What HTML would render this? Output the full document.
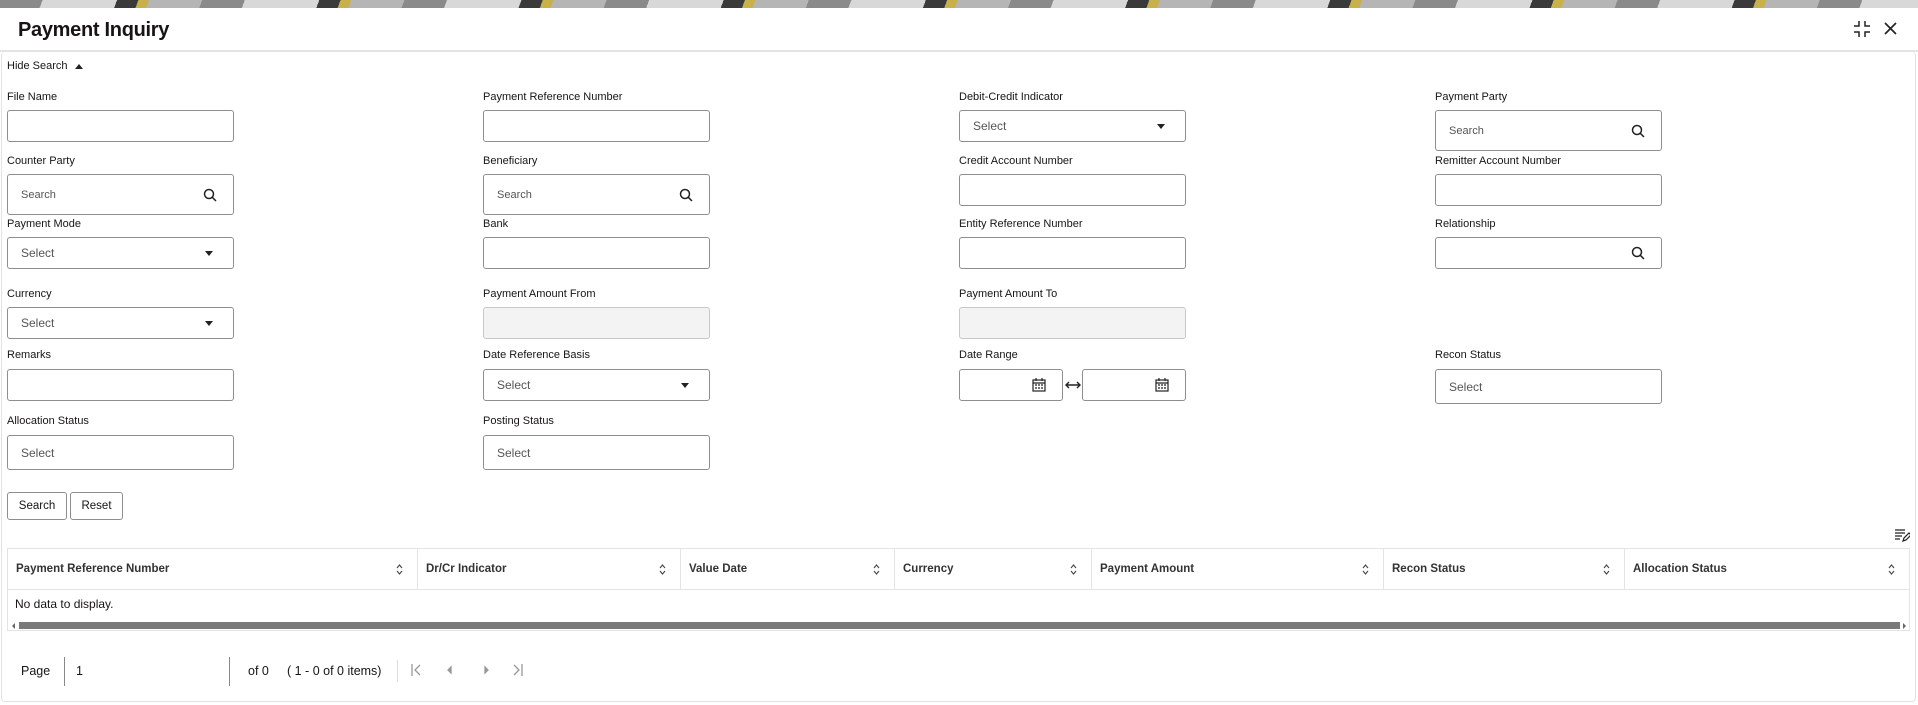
<!DOCTYPE html>
<html><head><meta charset="utf-8"><style>
*{box-sizing:border-box;margin:0;padding:0}
body{width:1918px;height:705px;position:relative;background:#fff;font-family:"Liberation Sans",sans-serif;color:#161513;overflow:hidden}
.ban{position:absolute;left:0;top:0;width:1918px;height:8px;background:repeating-linear-gradient(110deg,#8a8a8a 0 40px,#d8d8d8 40px 110px,#3a3a3a 110px 130px,#c8b04a 130px 140px,#b5b5b5 140px 190px)}
.ttl{position:absolute;left:0;top:8px;width:1918px;height:44px;background:#fff;border-bottom:2px solid #e4e4e4}
.ttl h1{position:absolute;left:18px;top:11px;font-size:20px;font-weight:bold;letter-spacing:-.3px}
.card{position:absolute;left:1px;top:52px;width:1915px;height:650px;border:1px solid #e2e2e2;border-top:none;border-radius:4px}
.a{position:absolute;font-size:11.5px}
.l{position:absolute;font-size:11px;color:#161513}
.in{position:absolute;width:227px;height:32px;border:1px solid #8e8e8e;border-radius:3px;background:#fff;font-size:12px;color:#555}
.in span{position:absolute;left:13px;top:50%;transform:translateY(-50%)}
.s{height:41px}
.dis{background:#f3f3f3;border-color:#c8c8c8}
.car{position:absolute;right:20px;top:50%;margin-top:-2px;border-left:4px solid transparent;border-right:4px solid transparent;border-top:5px solid #222}
.mag{position:absolute;right:16px;top:50%;transform:translateY(-50%)}
.btn{position:absolute;top:492px;height:28px;border:1px solid #8e8e8e;border-radius:3px;font-size:11.5px;line-height:26px;text-align:center;background:#fff}
.th{position:absolute;top:548px;height:42px;border-top:1px solid #e4e4e4;border-bottom:1px solid #e4e4e4;font-size:11.5px;font-weight:bold;color:#333}
.col{position:absolute;top:0;height:41px;border-right:1px solid #e4e4e4;line-height:41px;padding-left:8px}
.sort{position:absolute;right:14px;top:15px}
</style></head><body>
<div class="ban"></div>
<div class="ttl"><h1>Payment Inquiry</h1>
<svg style="position:absolute;left:1853px;top:12px" width="18" height="18" viewBox="0 0 18 18" fill="none" stroke="#222" stroke-width="1.5"><path d="M6 1v5H1M12 1v5h5M6 17v-5H1M12 17v-5h5"/></svg>
<svg style="position:absolute;left:1884px;top:14px" width="13" height="13" viewBox="0 0 13 13" stroke="#222" stroke-width="1.7"><path d="M1 1l11 11M12 1L1 12"/></svg>
</div>
<div class="card"></div>
<div class="a" style="left:7px;top:60px;font-size:11px">Hide Search <span style="display:inline-block;margin-left:4px;border-left:4px solid transparent;border-right:4px solid transparent;border-bottom:5px solid #222"></span></div>

<div class="l" style="left:7px;top:91px">File Name</div><div class="in" style="left:7px;top:110px"></div>
<div class="l" style="left:483px;top:91px">Payment Reference Number</div><div class="in" style="left:483px;top:110px"></div>
<div class="l" style="left:959px;top:91px">Debit-Credit Indicator</div><div class="in" style="left:959px;top:110px"><span>Select</span><i class="car"></i></div>
<div class="l" style="left:1435px;top:91px">Payment Party</div><div class="in s" style="left:1435px;top:110px"><span style="font-size:11px">Search</span><svg class="mag" width="14" height="14" viewBox="0 0 14 14" fill="none" stroke="#222" stroke-width="1.5"><circle cx="6" cy="6" r="4.5"/><path d="M9.3 9.3L13 13"/></svg></div>

<div class="l" style="left:7px;top:155px">Counter Party</div><div class="in s" style="left:7px;top:174px"><span style="font-size:11px">Search</span><svg class="mag" width="14" height="14" viewBox="0 0 14 14" fill="none" stroke="#222" stroke-width="1.5"><circle cx="6" cy="6" r="4.5"/><path d="M9.3 9.3L13 13"/></svg></div>
<div class="l" style="left:483px;top:155px">Beneficiary</div><div class="in s" style="left:483px;top:174px"><span style="font-size:11px">Search</span><svg class="mag" width="14" height="14" viewBox="0 0 14 14" fill="none" stroke="#222" stroke-width="1.5"><circle cx="6" cy="6" r="4.5"/><path d="M9.3 9.3L13 13"/></svg></div>
<div class="l" style="left:959px;top:155px">Credit Account Number</div><div class="in" style="left:959px;top:174px"></div>
<div class="l" style="left:1435px;top:155px">Remitter Account Number</div><div class="in" style="left:1435px;top:174px"></div>

<div class="l" style="left:7px;top:218px">Payment Mode</div><div class="in" style="left:7px;top:237px"><span>Select</span><i class="car"></i></div>
<div class="l" style="left:483px;top:218px">Bank</div><div class="in" style="left:483px;top:237px"></div>
<div class="l" style="left:959px;top:218px">Entity Reference Number</div><div class="in" style="left:959px;top:237px"></div>
<div class="l" style="left:1435px;top:218px">Relationship</div><div class="in" style="left:1435px;top:237px"><svg class="mag" width="14" height="14" viewBox="0 0 14 14" fill="none" stroke="#222" stroke-width="1.5"><circle cx="6" cy="6" r="4.5"/><path d="M9.3 9.3L13 13"/></svg></div>

<div class="l" style="left:7px;top:288px">Currency</div><div class="in" style="left:7px;top:307px"><span>Select</span><i class="car"></i></div>
<div class="l" style="left:483px;top:288px">Payment Amount From</div><div class="in dis" style="left:483px;top:307px"></div>
<div class="l" style="left:959px;top:288px">Payment Amount To</div><div class="in dis" style="left:959px;top:307px"></div>

<div class="l" style="left:7px;top:349px">Remarks</div><div class="in" style="left:7px;top:369px"></div>
<div class="l" style="left:483px;top:349px">Date Reference Basis</div><div class="in" style="left:483px;top:369px"><span>Select</span><i class="car"></i></div>
<div class="l" style="left:959px;top:349px">Date Range</div>
<div class="in" style="left:959px;top:369px;width:104px"><svg class="mag" width="14" height="14" viewBox="0 0 14 14" fill="none" stroke="#222" stroke-width="1.2"><rect x="1" y="2" width="12" height="11"/><path d="M1 5h12M4 0v3M10 0v3M3 7h2M6 7h2M9 7h2M3 10h2M6 10h2M9 10h2"/></svg></div>
<svg style="position:absolute;left:1065px;top:380px" width="16" height="10" viewBox="0 0 16 10" fill="none" stroke="#222" stroke-width="1.4"><path d="M1 5h14M4 2L1 5l3 3M12 2l3 3-3 3"/></svg>
<div class="in" style="left:1082px;top:369px;width:104px"><svg class="mag" width="14" height="14" viewBox="0 0 14 14" fill="none" stroke="#222" stroke-width="1.2"><rect x="1" y="2" width="12" height="11"/><path d="M1 5h12M4 0v3M10 0v3M3 7h2M6 7h2M9 7h2M3 10h2M6 10h2M9 10h2"/></svg></div>
<div class="l" style="left:1435px;top:349px">Recon Status</div><div class="in" style="left:1435px;top:369px;height:35px"><span>Select</span></div>

<div class="l" style="left:7px;top:415px">Allocation Status</div><div class="in" style="left:7px;top:435px;height:35px"><span>Select</span></div>
<div class="l" style="left:483px;top:415px">Posting Status</div><div class="in" style="left:483px;top:435px;height:35px"><span>Select</span></div>

<div class="btn" style="left:7px;width:60px">Search</div>
<div class="btn" style="left:70px;width:53px">Reset</div>

<svg style="position:absolute;left:1894px;top:528px" width="16" height="15" viewBox="0 0 16 15" fill="none" stroke="#222" stroke-width="1.2"><path d="M1 2h10M1 5h10M1 8h7M1 11h5M9 13l1-3 5-5 2 2-5 5z"/></svg>

<div class="th" style="left:7px;width:1903px;border-left:1px solid #e4e4e4;border-right:1px solid #e4e4e4">
<div class="col" style="left:0;width:410px">Payment Reference Number<svg class="sort" width="7" height="11" viewBox="0 0 7 11" fill="none" stroke="#444" stroke-width="1.1"><path d="M1 4l2.5-3 2.5 3M1 7l2.5 3 2.5-3"/></svg></div>
<div class="col" style="left:410px;width:263px">Dr/Cr Indicator<svg class="sort" width="7" height="11" viewBox="0 0 7 11" fill="none" stroke="#444" stroke-width="1.1"><path d="M1 4l2.5-3 2.5 3M1 7l2.5 3 2.5-3"/></svg></div>
<div class="col" style="left:673px;width:214px">Value Date<svg class="sort" width="7" height="11" viewBox="0 0 7 11" fill="none" stroke="#444" stroke-width="1.1"><path d="M1 4l2.5-3 2.5 3M1 7l2.5 3 2.5-3"/></svg></div>
<div class="col" style="left:887px;width:197px">Currency<svg class="sort" width="7" height="11" viewBox="0 0 7 11" fill="none" stroke="#444" stroke-width="1.1"><path d="M1 4l2.5-3 2.5 3M1 7l2.5 3 2.5-3"/></svg></div>
<div class="col" style="left:1084px;width:292px">Payment Amount<svg class="sort" width="7" height="11" viewBox="0 0 7 11" fill="none" stroke="#444" stroke-width="1.1"><path d="M1 4l2.5-3 2.5 3M1 7l2.5 3 2.5-3"/></svg></div>
<div class="col" style="left:1376px;width:241px">Recon Status<svg class="sort" width="7" height="11" viewBox="0 0 7 11" fill="none" stroke="#444" stroke-width="1.1"><path d="M1 4l2.5-3 2.5 3M1 7l2.5 3 2.5-3"/></svg></div>
<div class="col" style="left:1617px;width:284px;border-right:none">Allocation Status<svg class="sort" width="7" height="11" viewBox="0 0 7 11" fill="none" stroke="#444" stroke-width="1.1"><path d="M1 4l2.5-3 2.5 3M1 7l2.5 3 2.5-3"/></svg></div>
</div>
<div style="position:absolute;left:7px;top:590px;width:1903px;height:41px;border:1px solid #e4e4e4;border-top:none"></div>
<div class="a" style="left:15px;top:597px;font-size:12px">No data to display.</div>
<div style="position:absolute;left:19px;top:622px;width:1881px;height:7px;background:#7a7a7a"></div>
<div style="position:absolute;left:12px;top:623px;border-top:3px solid transparent;border-bottom:3px solid transparent;border-right:3px solid #666"></div>
<div style="position:absolute;left:1903px;top:623px;border-top:3px solid transparent;border-bottom:3px solid transparent;border-left:3px solid #666"></div>

<div class="a" style="left:21px;top:664px;font-size:12.5px">Page</div>
<div style="position:absolute;left:64px;top:657px;width:166px;height:29px;border-left:1px solid #888;border-right:1px solid #888"></div>
<div class="a" style="left:76px;top:664px;font-size:12.5px">1</div>
<div class="a" style="left:248px;top:664px;font-size:12.5px">of 0</div>
<div class="a" style="left:287px;top:664px;font-size:12.5px">( 1 - 0 of 0 items)</div>
<div style="position:absolute;left:397px;top:660px;width:1px;height:22px;background:#ddd"></div>
<svg style="position:absolute;left:410px;top:663px" width="120" height="14" viewBox="0 0 120 14" fill="none" stroke="#999" stroke-width="1.3"><path d="M2 1v12M10 2l-5 5 5 5"/><path d="M41 4l-3 3 3 3z" fill="#999"/><path d="M75 4l3 3-3 3z" fill="#999"/><path d="M104 2l5 5-5 5M112 1v12"/></svg>
</body></html>
